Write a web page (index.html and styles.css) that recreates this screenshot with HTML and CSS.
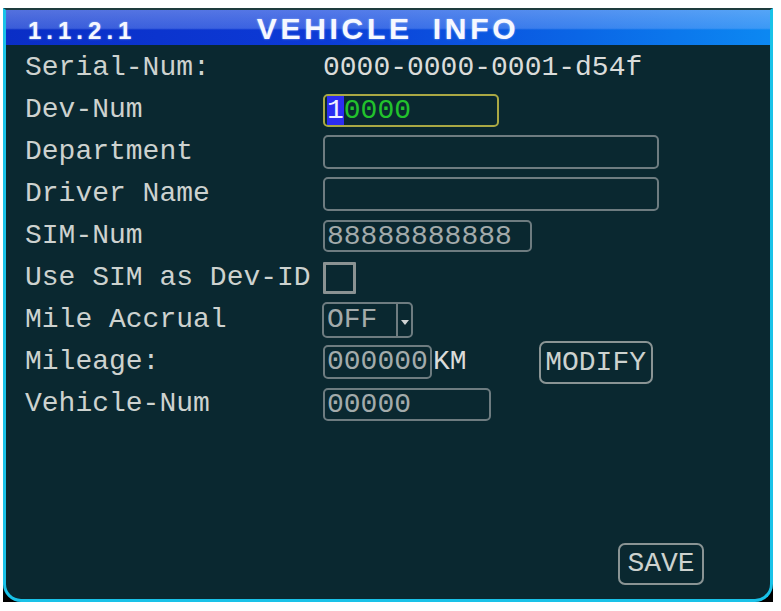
FILE: index.html
```html
<!DOCTYPE html>
<html lang="en">
<head>
    <meta charset="UTF-8">
    <title>1.1.2.1 VEHICLE INFO</title>
    <link rel="stylesheet" href="styles.css">
</head>
<body>
<div class="screen">
    <div class="panel">
        <div class="head">
            <span class="menu-no">1.1.2.1</span>
            <span class="title">VEHICLE INFO</span>
        </div>

        <div class="form">
            <div class="label">Serial-Num:</div>
            <div class="field"><span class="value">0000-0000-0001-d54f</span></div>

            <div class="label">Dev-Num</div>
            <div class="field">
                <div class="input focus w-dev"><span class="cursor">1</span><span class="typed">0000</span></div>
            </div>

            <div class="label">Department</div>
            <div class="field"><div class="input w-long"></div></div>

            <div class="label">Driver Name</div>
            <div class="field"><div class="input w-long"></div></div>

            <div class="label">SIM-Num</div>
            <div class="field"><div class="input w-sim">88888888888</div></div>

            <div class="label">Use SIM as Dev-ID</div>
            <div class="field"><div class="check"></div></div>

            <div class="label">Mile Accrual</div>
            <div class="field">
                <div class="select">
                    <span class="select-text">OFF</span>
                    <span class="select-arrow"></span>
                </div>
            </div>

            <div class="label">Mileage:</div>
            <div class="field">
                <div class="input w-mile">000000</div>
                <span class="value unit">KM</span>
                <div class="btn btn-modify">MODIFY</div>
            </div>

            <div class="label">Vehicle-Num</div>
            <div class="field"><div class="input w-veh">00000</div></div>
        </div>

        <div class="foot">
            <div class="btn btn-save">SAVE</div>
        </div>
    </div>
</div>
</body>
</html>
```

FILE: styles.css
```css
*{
    margin: 0;
    padding: 0;
    box-sizing: border-box;
}
body{
    background-color: #fff;
    font-family: "Liberation Mono", "DejaVu Sans Mono", monospace;
}
.screen{
    width: 770px;
    height: 594px;
    margin: 8px 0 0 3px;
    background-color: #000;
}
.panel{
    display: flex;
    flex-direction: column;
    height: 100%;
    background-color: #0a2830;
    border: 3px solid #19c2e8;
    border-top: 2px solid #1e3c3e;
    border-radius: 0 0 18px 18px;
}

/* title bar */
.head{
    display: grid;
    grid-template-columns: 1fr auto 1fr;
    align-items: baseline;
    height: 35px;
    padding: 2px 22px 0;
    line-height: 33px;
    font-family: "Liberation Sans", Arial, sans-serif;
    font-weight: bold;
    color: #f6f8ff;
    text-shadow: 0 0 2px rgba(170, 200, 255, 0.8);
    background:
        linear-gradient(to bottom, rgba(185, 205, 255, 0.42) 0%, rgba(160, 190, 255, 0.32) 52%, rgba(255, 255, 255, 0) 57%),
        linear-gradient(to right, #0a2ec6 0%, #0c3ad6 40%, #0a66e6 75%, #0c88f2 100%);
}
.menu-no{
    font-size: 24px;
    letter-spacing: 5px;
}
.title{
    font-size: 30px;
    letter-spacing: 3.7px;
    word-spacing: 8px;
}

/* form rows */
.form{
    display: grid;
    grid-template-columns: 298px 1fr;
    grid-auto-rows: 42px;
    padding: 2px 0 0 19px;
    font-size: 28px;
    color: #cdd2cf;
}
.label{
    display: flex;
    align-items: center;
    line-height: 42px;
    white-space: nowrap;
}
.field{
    display: flex;
    align-items: center;
}
.value{
    color: #dadcda;
    line-height: 42px;
}
.unit{
    margin-left: 1px;
}
.input{
    height: 33px;
    padding: 0 2px;
    border: 2px solid #6e7c80;
    border-radius: 5px;
    line-height: 29px;
    color: #a3abab;
    white-space: nowrap;
}
.w-dev{ width: 176px; }
.w-long{ width: 336px; height: 34px; }
.w-sim{ width: 209px; height: 32px; }
.w-mile{ width: 109px; height: 34px; }
.w-veh{ width: 168px; }
.focus{
    border-color: #aaa844;
}
.cursor{
    display: inline-block;
    height: 29px;
    background-color: #2c2cf2;
    color: #f0f0ff;
}
.typed{
    color: #22c22c;
}
.check{
    width: 33px;
    height: 32px;
    border: 3px solid #8a9292;
    border-radius: 1px;
}
.select{
    display: flex;
    width: 91px;
    height: 36px;
    margin-left: -1px;
    border: 2px solid #6e7c80;
    border-radius: 5px;
    color: #a3abab;
    line-height: 32px;
}
.select-text{
    flex: 1;
    padding-left: 3px;
    border-right: 2px solid #6e7c80;
}
.select-arrow{
    position: relative;
    width: 13px;
}
.select-arrow::after{
    content: "";
    position: absolute;
    left: 3px;
    top: 16px;
    border-left: 4px solid transparent;
    border-right: 4px solid transparent;
    border-top: 5px solid #d0d4d4;
}
.btn{
    text-align: center;
    border: 2px solid #8a9494;
    border-radius: 7px;
    color: #cdd2cf;
}
.btn-modify{
    width: 114px;
    height: 43px;
    margin-left: 72px;
    line-height: 39px;
}

/* bottom bar */
.foot{
    display: flex;
    justify-content: flex-end;
    margin-top: auto;
    padding: 0 66px 14px 0;
    font-size: 28px;
}
.btn-save{
    width: 86px;
    height: 42px;
    line-height: 38px;
}
```
